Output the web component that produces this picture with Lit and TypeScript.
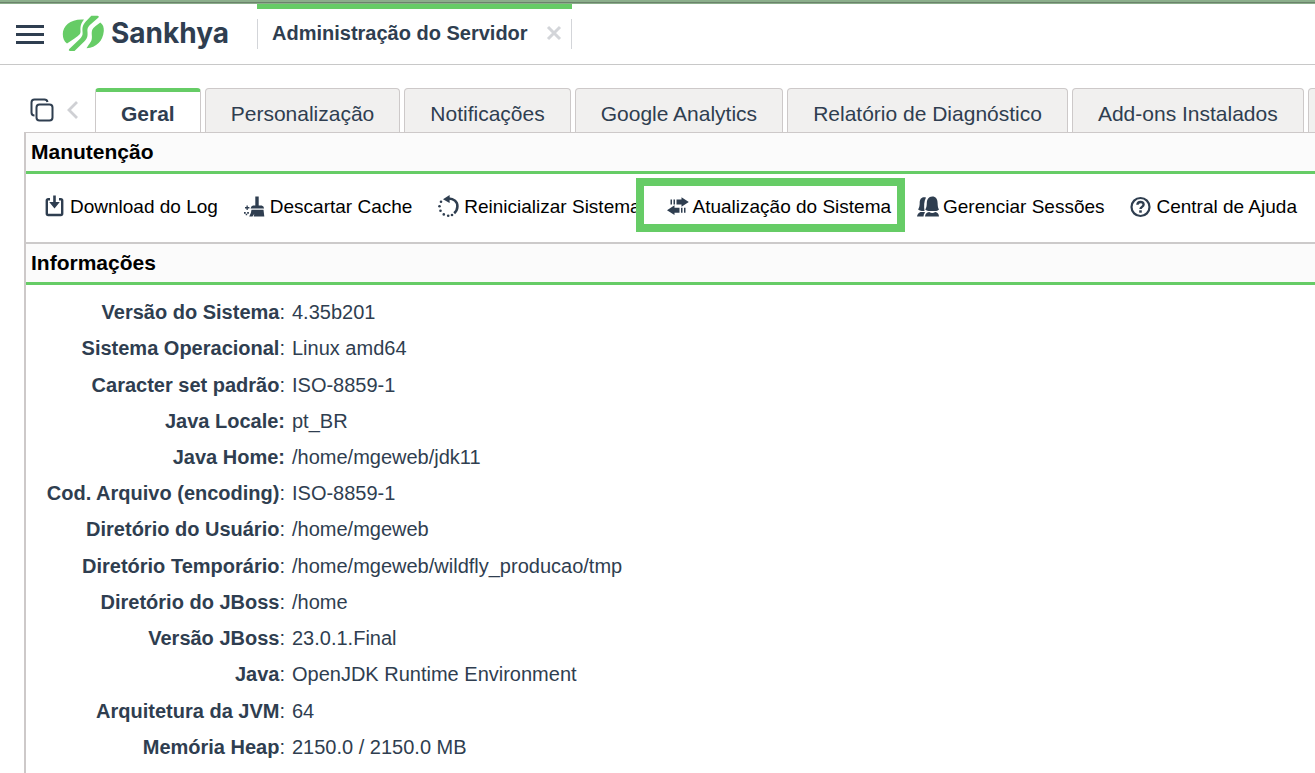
import { LitElement, html, css, svg } from "lit";
import { customElement, property, state } from "lit/decorators.js";
import { classMap } from "lit/directives/class-map.js";

const icons = {
  download: svg`<path d="M6 4.200H4.200Q2.800 4.200 2.800 5.600V18.600Q2.800 20 4.200 20H16.800Q18.200 20 18.200 18.600V5.600Q18.200 4.200 16.800 4.200H15" fill="none" stroke="currentColor" stroke-width="2.400"/><path d="M9.200 .5h2.600v6.500h4L10.500 13.500 5.200 7h4z" fill="currentColor"/>`,
  broom: svg`<path d="M11.300 1.500h3.400v9h3q2.200.4 2.400 3H6.600q.3-2.600 2.400-3h2.300zM7.500 14.800H19.500l.8 6.700H9.700l.6-2.800-1.800 2.800H5.200q2-3 2.300-6.700zM2.500 10.500h1.300v1.600h1.600v1.300H3.800V15H2.500v-1.600H1v-1.300h1.500zM0 17h1.700v1.700H0zM3.200 17h1.700v1.700H3.200zM1.700 18.700h1.500v1.500H1.700z" fill="currentColor"/>`,
  restart: svg`<path d="M9.500 3.500C16 3 19.600 7 19.400 11.500c-.1 2.800-1.200 5-3.200 6.700" fill="none" stroke="currentColor" stroke-width="2.600"/><path d="M5 4.300 11.600 0v8z" fill="currentColor"/><g fill="currentColor"><circle cx="3" cy="6.800" r="1.300"/><circle cx="1.500" cy="11.300" r="1.300"/><circle cx="2.500" cy="15.800" r="1.300"/><circle cx="5.800" cy="19.400" r="1.300"/><circle cx="10.200" cy="20.700" r="1.300"/><circle cx="14" cy="20" r="1.300"/></g>`,
  swap: svg`<path d="M3.500 4.500H5v5H3.500zM6.500 4.500H8v5H6.500zM9.500 4.500h5V2.200L21.800 7l-7.300 4.800V9.500h-5zM18.500 12.800H17v5h1.500zM15.500 12.800H14v5h1.500zM12.500 12.800h-5v-2.600L0 15.300l7.500 4.800v-2.300h5z" fill="currentColor"/>`,
  users: svg`<path d="M9 2.500C5 1.200 2.600 3.500 2.700 8c0 2.600-.4 4.700-1.600 6.500q1.800 1.300 3.600 1.400h2.800C6.800 11 7 6 9 2.500zM7.300 17H3.500Q.5 18 0 21.500h6.500Q6.600 19 8 17.500z" fill="currentColor"/><path d="M15.300 1.500C11.500 1.500 9.900 4.500 9.800 8c0 2.900-.4 4.700-1.600 6.500 1.400 1.100 3 1.500 4.600 1.500h5.200c1.500 0 2.800-.4 4-1.500-1.100-1.800-1.300-3.500-1.400-6.500-.1-4-1.700-6.500-5.300-6.500zM8 21.500c.3-2.600 1.400-3.900 4.200-4.500q3 2.200 6 0c2.600.6 3.600 1.900 3.800 4.500z" fill="currentColor"/>`,
  help: svg`<circle cx="10.500" cy="12" r="9" fill="none" stroke="currentColor" stroke-width="2.200"/><path d="M7.400 9.700c.2-3.700 6.200-3.600 6.200-.2 0 2.400-3.100 2.300-3.100 4.600" fill="none" stroke="currentColor" stroke-width="2.400"/><path d="M9.200 15.300h2.600v2.400H9.200z" fill="currentColor"/>`,
};

type IconName = keyof typeof icons;

interface Action {
  icon: IconName;
  label: string;
  highlighted?: boolean;
}

interface InfoRow {
  label: string;
  value: string;
  boldColon?: boolean;
}

const TABS = [
  "Geral",
  "Personalização",
  "Notificações",
  "Google Analytics",
  "Relatório de Diagnóstico",
  "Add-ons Instalados",
  "",
];

const ACTIONS: Action[] = [
  { icon: "download", label: "Download do Log" },
  { icon: "broom", label: "Descartar Cache" },
  { icon: "restart", label: "Reinicializar Sistema" },
  { icon: "swap", label: "Atualização do Sistema", highlighted: true },
  { icon: "users", label: "Gerenciar Sessões" },
  { icon: "help", label: "Central de Ajuda" },
];

const INFO: InfoRow[] = [
  { label: "Versão do Sistema", value: "4.35b201" },
  { label: "Sistema Operacional", value: "Linux amd64" },
  { label: "Caracter set padrão", value: "ISO-8859-1" },
  { label: "Java Locale", value: "pt_BR", boldColon: true },
  { label: "Java Home", value: "/home/mgeweb/jdk11", boldColon: true },
  { label: "Cod. Arquivo (encoding)", value: "ISO-8859-1" },
  { label: "Diretório do Usuário", value: "/home/mgeweb" },
  { label: "Diretório Temporário", value: "/home/mgeweb/wildfly_producao/tmp" },
  { label: "Diretório do JBoss", value: "/home" },
  { label: "Versão JBoss", value: "23.0.1.Final" },
  { label: "Java", value: "OpenJDK Runtime Environment" },
  { label: "Arquitetura da JVM", value: "64" },
  { label: "Memória Heap", value: "2150.0 / 2150.0 MB" },
];

@customElement("app-header")
export class AppHeader extends LitElement {
  @property() screen = "";

  static styles = css`
    :host {
      display: block;
      border-top: 2px solid #8bae8b;
    }
    .strip {
      height: 1px;
      background: #6b826b;
      border-bottom: 1px solid #8bae8b;
    }
    .bar {
      display: flex;
      align-items: flex-start;
      height: 60px;
      border-bottom: 1px solid #c8c8c8;
    }
    button {
      padding: 0;
      border: 0;
      background: none;
      color: inherit;
      font: inherit;
      cursor: pointer;
    }
    svg {
      display: block;
    }
    .menu {
      margin: 20px 18px 0 16px;
    }
    .brand {
      display: flex;
      align-items: center;
      gap: 6px;
      height: 58px;
      width: 195px;
      color: #2f3e50;
      font: 700 28px/32px Inter, sans-serif;
      text-decoration: none;
    }
    .screen {
      display: flex;
      align-items: center;
      height: 45px;
      border-top: 5px solid #66cc66;
      box-sizing: border-box;
    }
    .inner {
      display: flex;
      align-items: center;
      gap: 18px;
      height: 30px;
      padding: 0 9px 2px 14px;
      margin-top: 10px;
      box-sizing: border-box;
      border: solid #d3d5d9;
      border-width: 0 1px;
    }
    .title {
      font-weight: 700;
      font-size: 20px;
      line-height: 24px;
    }
  `;

  render() {
    return html`
      <div class="strip"></div>
      <header class="bar">
        <button class="menu" aria-label="Menu">
          <svg width="28" height="21" viewBox="0 0 28 21">
            <path d="M0 2.500H28M0 10.500H28M0 18.500H28" stroke="#2f3e50" stroke-width="3" />
          </svg>
        </button>
        <a class="brand" href="#">
          <svg width="43" height="40" viewBox="0 0 43 40">
            <g fill="#66cc66">
              <path d="M22 6.500C9 5.500.8 12.500.8 21c0 4 1.200 7.500 4.200 9.500L12.500 25.500C17.500 22 18.800 21 18.500 17.500 18.300 13 19 10.500 22 6.500z" />
              <path d="M29.300 2.700H35.500q2 .2 1 1.800L29 11c-3.300 3-3.800 4.500-3.500 8 .3 4.500-.3 6.500-3 9.200L12.500 38H8q-1.800-.3-1-1.800l10.500-10c3-3 3.300-4.200 3-7.700-.3-4.500.3-6.500 3.300-10z" />
              <path d="M38.300 9.500c2.800 2 3.700 4.800 3.500 8.500C41 28 34.500 34.500 24.500 35.300l2-3.300c3-3.500 3.700-5.500 3.300-10-.3-4.500.5-6.200 3.500-8.700z" />
            </g>
          </svg>
          <span>Sankhya</span>
        </a>
        <div class="screen">
          <div class="inner">
            <span class="title">${this.screen}</span>
            <button aria-label="Fechar">
              <svg width="16" height="16" viewBox="0 0 16 16">
                <path d="M2 2 14 14M14 2 2 14" stroke="#d3d5d9" stroke-width="3" />
              </svg>
            </button>
          </div>
        </div>
      </header>
    `;
  }
}

@customElement("section-title")
export class SectionTitle extends LitElement {
  static styles = css`
    :host {
      display: block;
      background: #fbfbfb;
      border-bottom: 3px solid #66cc66;
    }
    h2 {
      margin: 0;
      padding: 0 5px;
      color: #000;
      font-size: 21px;
      line-height: 38px;
    }
  `;

  render() {
    return html`<h2><slot></slot></h2>`;
  }
}

@customElement("app-root")
export class AppRoot extends LitElement {
  @state() private active = 0;

  static styles = css`
    :host {
      display: flex;
      flex-direction: column;
      min-height: 100vh;
      overflow-x: hidden;
      background: #fff;
      color: #2f3e50;
      font-family: "Liberation Sans", Arial, sans-serif;
    }
    button {
      padding: 0;
      border: 0;
      background: none;
      color: inherit;
      font: inherit;
      cursor: pointer;
    }
    svg {
      display: block;
      flex: none;
    }
    .tabs {
      display: flex;
      align-items: flex-end;
      gap: 4px;
      padding: 23px 0 0 30px;
      overflow: hidden;
    }
    .tools {
      display: flex;
      align-items: center;
      gap: 12px;
      height: 44px;
      padding-right: 12px;
    }
    .tab {
      flex: none;
      height: 44px;
      padding: 6px 25px 0;
      box-sizing: border-box;
      border: 1px solid #cdc9c9;
      border-bottom: 0;
      border-radius: 4px 4px 0 0;
      background: #f1f0ef;
      font-size: 21px;
      line-height: 24px;
      white-space: nowrap;
    }
    .tab.active {
      position: relative;
      height: 45px;
      margin-bottom: -1px;
      padding-top: 2px;
      border-top: 4px solid #66cc66;
      background: #fff;
      font-weight: 700;
    }
    .panel {
      display: flex;
      flex: 1;
      flex-direction: column;
      margin-left: 24px;
      border: solid #cdc9c9;
      border-width: 1px 0 0 2px;
    }
    .actions {
      display: flex;
      align-items: center;
      justify-content: space-between;
      height: 66px;
      padding: 0 18px 2px 18px;
      box-sizing: content-box;
      border-bottom: 2px solid #cccaca;
    }
    .action {
      position: relative;
      display: flex;
      align-items: center;
      gap: 4px;
      font-size: 19px;
      line-height: 24px;
      white-space: nowrap;
    }
    .action span {
      color: #000;
    }
    .action.highlighted {
      z-index: 1;
    }
    .action.highlighted::before {
      content: "";
      position: absolute;
      inset: -17px -14px -13px -31px;
      z-index: -1;
      border: 8px solid #66cc66;
      background: #fff;
    }
    .info {
      display: grid;
      flex: 1;
      grid-auto-rows: minmax(36px, 1fr);
      margin: 0;
      padding: 9px 0 8px;
      font-size: 20px;
      line-height: 24px;
    }
    .row {
      display: grid;
      grid-template-columns: 259px 1fr;
      gap: 7px;
      align-items: center;
    }
    dt {
      text-align: right;
      white-space: nowrap;
    }
    dd {
      margin: 0;
    }
  `;

  render() {
    return html`
      <app-header screen="Administração do Servidor"></app-header>
      <nav class="tabs">
        <div class="tools">
          <button aria-label="Duplicar">
            <svg width="24" height="24" viewBox="0 0 24 24" fill="none" stroke="#2f3e50" stroke-width="2">
              <rect x="6.500" y="6.500" width="16" height="16" rx="3" />
              <path d="M4.500 17.500C2.300 17.500 1.500 16 1.500 14.500V4.500q0-3 3-3h10q2.500 0 3 2.500" />
            </svg>
          </button>
          <button aria-label="Abas anteriores">
            <svg width="13" height="20" viewBox="0 0 13 20">
              <path d="M11 2 3 10l8 8" fill="none" stroke="#cfd0d4" stroke-width="2.800" />
            </svg>
          </button>
        </div>
        ${TABS.map(
          (name, i) => html`<button
            class=${classMap({ tab: true, active: i === this.active })}
            aria-label=${name || "Mais"}
            @click=${() => (this.active = i)}
          >${name}</button>`
        )}
      </nav>
      <main class="panel">
        <section-title>Manutenção</section-title>
        <div class="actions">
          ${ACTIONS.map(
            (a) => html`<button class=${classMap({ action: true, highlighted: !!a.highlighted })}>
              <svg width="22" height="24" viewBox="0 0 22 24">${icons[a.icon]}</svg>
              <span>${a.label}</span>
            </button>`
          )}
        </div>
        <section-title>Informações</section-title>
        <dl class="info">
          ${INFO.map(
            (r) => html`<div class="row">
              <dt>${r.boldColon ? html`<b>${r.label}:</b>` : html`<b>${r.label}</b>:`}</dt>
              <dd>${r.value}</dd>
            </div>`
          )}
        </dl>
      </main>
    `;
  }
}
